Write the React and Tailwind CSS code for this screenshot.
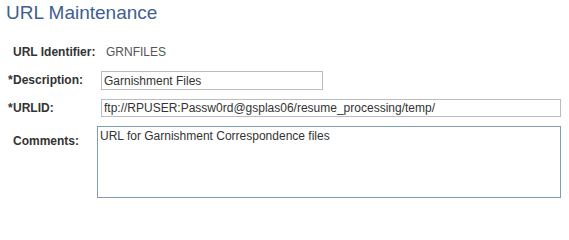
const font = { fontFamily: '"Liberation Sans", Arial, sans-serif' }

function Label({ required, children }) {
  return (
    <span className="flex w-[84px] shrink-0 text-[12px] font-bold text-[#333333]">
      {required && <span className="w-0 -translate-x-[5px]">*</span>}
      {children}
    </span>
  )
}

export default function App() {
  return (
    <div className="h-[206px] w-[569px] bg-white" style={font}>
      <h1 className="pl-[6px] pt-[1px] text-[19px] leading-[24px] text-[#3e5f91]">URL Maintenance</h1>

      <div className="flex flex-col pl-[13px] pt-[19px]">
        <div className="flex h-[16px] items-center">
          <Label>URL Identifier:</Label>
          <span className="ml-[9px] text-[12px] text-[#555555]">GRNFILES</span>
        </div>

        <div className="mt-[10px] flex items-center">
          <Label required>Description:</Label>
          <input
            className="ml-[4px] mt-[1px] h-[19px] w-[222px] border border-[#bcbcbc] px-[2px] text-[12px] text-[#333333] outline-none"
            defaultValue="Garnishment Files"
          />
        </div>

        <div className="mt-[9px] flex items-center">
          <Label required>URLID:</Label>
          <input
            className="ml-[4px] h-[18px] w-[460px] border border-[#bcbcbc] px-[2px] text-[12px] text-[#333333] outline-none"
            defaultValue="ftp://RPUSER:Passw0rd@gsplas06/resume_processing/temp/"
          />
        </div>

        <div className="mt-[9px] flex items-start">
          <span className="pt-[6px]">
            <Label>Comments:</Label>
          </span>
          <textarea
            className="h-[72px] w-[464px] resize-none border border-[#7f9db9] px-[2px] pt-[2px] text-[12px] leading-[14px] text-[#333333] outline-none"
            defaultValue="URL for Garnishment Correspondence files"
          />
        </div>
      </div>
    </div>
  )
}
